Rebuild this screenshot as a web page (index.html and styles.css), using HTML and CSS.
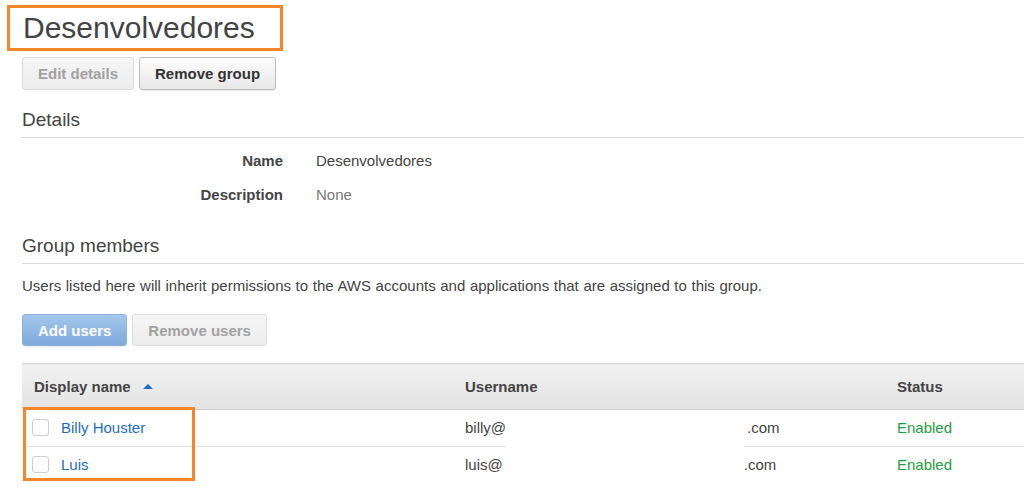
FILE: index.html
```html
<!DOCTYPE html>
<html lang="en">
<head>
  <meta charset="UTF-8">
  <meta name="viewport" content="width=device-width, initial-scale=1.0">
  <title>Desenvolvedores</title>
  <link rel="stylesheet" href="styles.css">
</head>
<body>
  <div class="page">
    <div class="title-box">
      <h1 class="title">Desenvolvedores</h1>
    </div>

    <div class="actions top-actions">
      <button class="btn" disabled>Edit details</button>
      <button class="btn">Remove group</button>
    </div>

    <h2 class="section-title">Details</h2>
    <dl class="details">
      <dt>Name</dt>
      <dd>Desenvolvedores</dd>
      <dt>Description</dt>
      <dd class="muted">None</dd>
    </dl>

    <h2 class="section-title members-title">Group members</h2>
    <p class="hint">Users listed here will inherit permissions to the AWS accounts and applications that are assigned to this group.</p>

    <div class="actions member-actions">
      <button class="btn btn-primary">Add users</button>
      <button class="btn" disabled>Remove users</button>
    </div>

    <!-- Members table -->
    <div class="table-wrap">
      <table class="members">
        <colgroup>
          <col class="col-name">
          <col class="col-user">
          <col>
        </colgroup>
        <thead>
          <tr>
            <th>Display name <span class="sort-up"></span></th>
            <th>Username</th>
            <th>Status</th>
          </tr>
        </thead>
        <tbody>
          <tr>
            <td class="name-cell"><span class="check"></span><a href="#" class="user-link">Billy Houster</a></td>
            <td>billy@<span class="masked"></span>.com</td>
            <td class="enabled">Enabled</td>
          </tr>
          <tr>
            <td class="name-cell"><span class="check"></span><a href="#" class="user-link">Luis</a></td>
            <td>luis@<span class="masked"></span>.com</td>
            <td class="enabled">Enabled</td>
          </tr>
        </tbody>
      </table>
      <div class="redact"></div>
      <div class="highlight"></div>
    </div>
  </div>
</body>
</html>
```

FILE: styles.css
```css
body {
  margin: 0;
  background: #fff;
  font-family: "Liberation Sans", Arial, sans-serif;
  font-size: 15px;
  color: #444;
  overflow: hidden;
}

.page {
  padding: 5px 0 0 22px;
}

.title-box {
  display: inline-block;
  margin-left: -15px;
  padding: 0 25px 0 13px;
  border: 3px solid #f6862a;
}

.title {
  margin: 0;
  font-size: 30px;
  font-weight: normal;
  line-height: 40px;
  color: #444;
}

.actions {
  display: flex;
  gap: 5px;
}

.top-actions {
  margin-top: 6px;
}

.member-actions {
  margin-top: 18px;
}

.btn {
  height: 33px;
  padding: 0 15px;
  font-family: inherit;
  font-size: 15px;
  font-weight: bold;
  color: #333;
  background: linear-gradient(#fdfdfd, #e7e7e7);
  border: 1px solid #bcbcbc;
  border-radius: 3px;
  box-shadow: 0 1px 1px rgba(0, 0, 0, 0.08);
  cursor: pointer;
}

.btn:disabled {
  color: #a2a2a2;
  background: linear-gradient(#f6f6f6, #ececec);
  border-color: #dcdcdc;
  box-shadow: none;
  cursor: default;
}

.member-actions .btn {
  height: 32px;
}

.btn-primary {
  color: #fff;
  background: linear-gradient(#a4c7ec, #7eaadc);
  border-color: #8cb3df;
}

.section-title {
  margin: 18px 0 0;
  padding-bottom: 5px;
  font-size: 19px;
  font-weight: normal;
  line-height: 24px;
  border-bottom: 1px solid #dcdcdc;
}

.members-title {
  margin-top: 22px;
}

.details {
  display: grid;
  grid-template-columns: 261px 1fr;
  column-gap: 33px;
  margin: 6px 0 0;
  line-height: 34px;
}

.details dt {
  font-weight: bold;
  text-align: right;
}

.details dd {
  margin: 0;
}

.details .muted {
  color: #777;
}

.hint {
  margin: 12px 0 0;
  line-height: 20px;
  word-spacing: 0.45px;
}

.table-wrap {
  position: relative;
  margin-top: 17px;
}

.members {
  width: 100%;
  border-collapse: collapse;
  table-layout: fixed;
}

.col-name {
  width: 431px;
}

.col-user {
  width: 432px;
}

.members th {
  padding: 13px 12px 12px;
  line-height: 20px;
  text-align: left;
  font-weight: bold;
  color: #444;
  background: linear-gradient(#f1f1f1, #e3e3e3);
  border-top: 1px solid #d8d8d8;
  border-bottom: 1px solid #cfcfcf;
}

.members td {
  padding: 8px 12px 8px;
  line-height: 20px;
  border-bottom: 1px solid #e1e1e1;
  white-space: nowrap;
}

.members tbody tr:last-child td {
  border-bottom: none;
}

.sort-up {
  display: inline-block;
  margin-left: 8px;
  vertical-align: 3px;
  border-left: 5px solid transparent;
  border-right: 5px solid transparent;
  border-bottom: 5px solid #1b6ec2;
}

.members .name-cell {
  padding-left: 10px;
}

.check {
  display: inline-block;
  width: 15px;
  height: 15px;
  margin-right: 12px;
  vertical-align: -3px;
  border: 1px solid #cdcdcd;
  border-radius: 3px;
  background: #fff;
}

.user-link {
  color: #1b6ec2;
  text-decoration: none;
}

.masked {
  display: inline-block;
  width: 241px;
}

.enabled {
  color: #1e9e3e;
}

/* white box hiding the e-mail addresses */
.redact {
  position: absolute;
  left: 484px;
  top: 48px;
  width: 238px;
  height: 72px;
  background: #fff;
}

.highlight {
  position: absolute;
  left: 1px;
  top: 44px;
  width: 166px;
  height: 68px;
  border: 3px solid #f6862a;
}
```
